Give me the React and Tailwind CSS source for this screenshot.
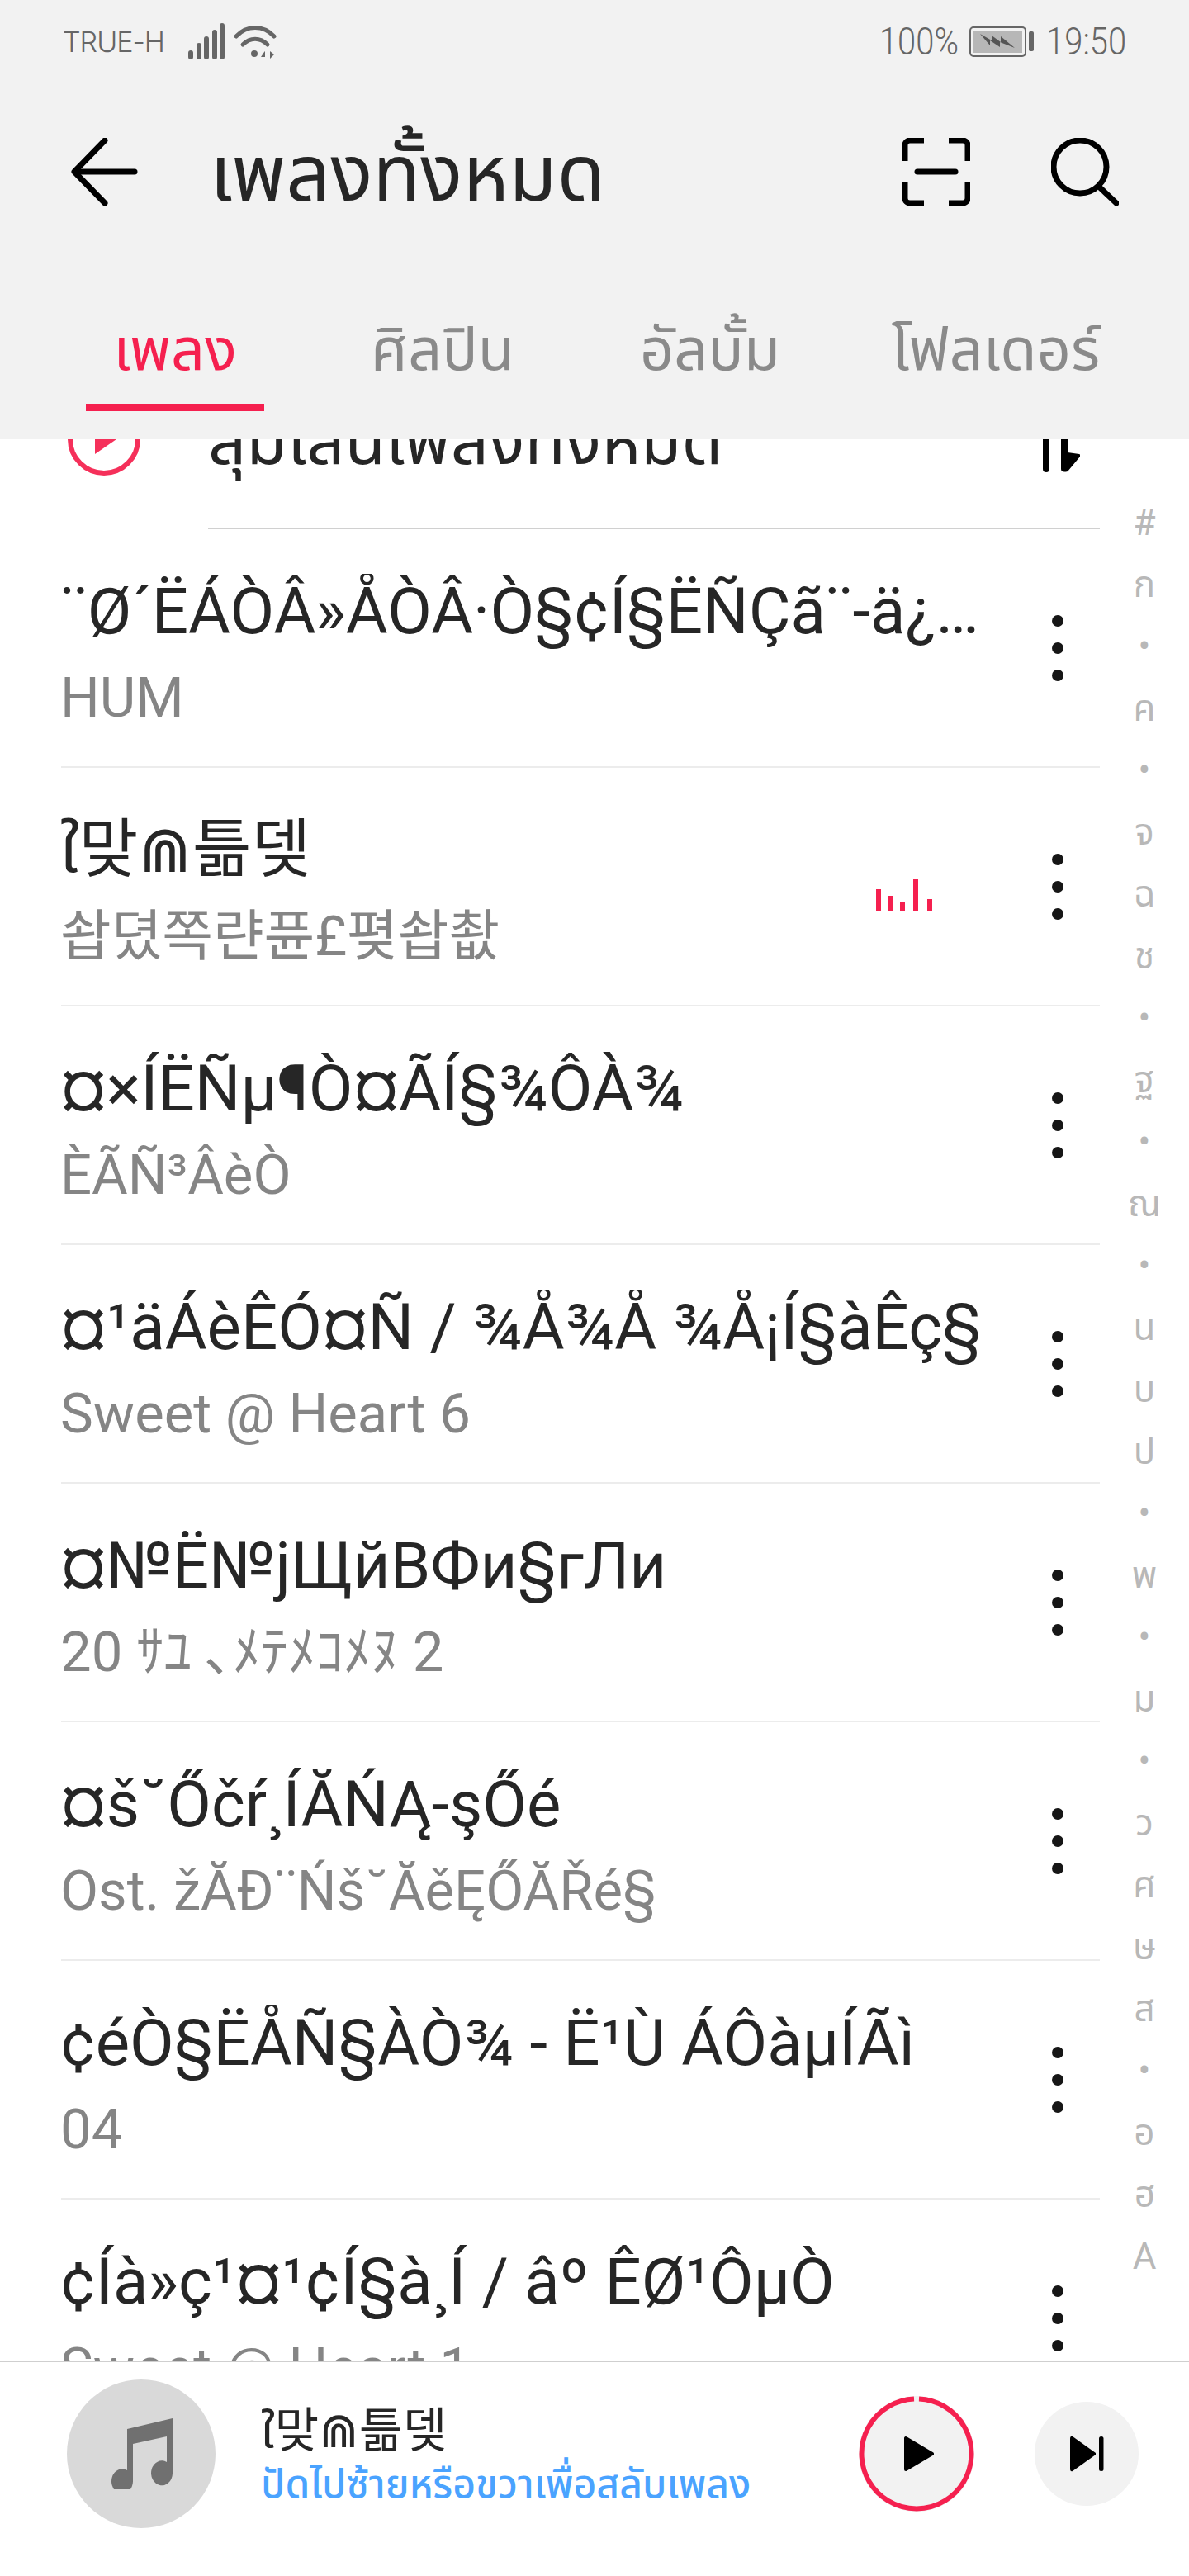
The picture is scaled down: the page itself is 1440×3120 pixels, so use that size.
import React from 'react';

const songs = [
  { title: '¨Ø´ËÁÒÂ»ÅÒÂ·Ò§¢Í§ËÑÇã¨-ä¿ÃéàÇÅÒ', sub: 'HUM' },
  { title: 'ใ맞⋒틂뎆', sub: '솹뎠쪽랸퓬£폊솹촶', playing: true },
  { title: '¤×ÍËÑµ¶Ò¤ÃÍ§¾ÔÀ¾', sub: 'ÈÃÑ³ÂèÒ' },
  { title: '¤¹äÁèÊÓ¤Ñ­ / ¾Å¾Å ¾Å¡Í§àÊç§', sub: 'Sweet @ Heart 6' },
  { title: '¤№Ë№jЩйВФи§гЛи', sub: '20 ｻﾕ ､ﾒﾃﾒｺﾒﾇ 2' },
  { title: '¤š˘Őčŕ¸ÍĂŃĄ-şŐé', sub: 'Ost. žĂĐ¨Ńš˘ĂěĘŐĂŘé§' },
  { title: '¢éÒ§ËÅÑ§ÀÒ¾ - Ë¹Ù ÁÔàµÍÃì', sub: '04' },
  { title: '¢Íà»ç¹¤¹¢Í§à¸Í / âº ÊØ¹ÔµÒ', sub: 'Sweet @ Heart 1' },
];

const indexChars = ['#', 'ก', '•', 'ค', '•', 'จ', 'ฉ', 'ช', '•', 'ฐ', '•', 'ณ', '•', 'น', 'บ', 'ป', '•', 'พ', '•', 'ม', '•', 'ว', 'ศ', 'ษ', 'ส', '•', 'อ', 'ฮ', 'A'];

const font = "font-['Roboto','Noto_Sans_Thai','Noto_Sans','Noto_Sans_CJK_KR','DejaVu_Sans',sans-serif]";

const Kebab = () => (
  <div className="flex flex-col gap-[19px] w-[14px] shrink-0">
    <span className="w-[14px] h-[14px] rounded-full bg-[#161616]" />
    <span className="w-[14px] h-[14px] rounded-full bg-[#161616]" />
    <span className="w-[14px] h-[14px] rounded-full bg-[#161616]" />
  </div>
);

const Equalizer = () => (
  <svg width="72" height="42" viewBox="0 0 72 42" className="shrink-0 mt-[20px]" fill="#f5204f">
    <rect x="2" y="14" width="6" height="26" />
    <rect x="16" y="22" width="6" height="18" />
    <rect x="31" y="30" width="6" height="10" />
    <rect x="47" y="2" width="6" height="38" />
    <rect x="64" y="26" width="6" height="14" />
  </svg>
);

const SongRow = ({ song }) => (
  <div className="h-[289px] ml-[74px] border-b-2 border-[#ececec] flex items-center">
    <div className="w-[1116px] shrink-0 min-w-0 pt-[11px] -ml-[1px]">
      <div className="text-[78px] leading-[92px] text-[#262626] truncate">{song.title}</div>
      <div className="text-[67px] leading-[80px] mt-[18px] text-[#858585] truncate">{song.sub}</div>
    </div>
    <div className="flex-1 flex items-center justify-end pr-[44px] -ml-[200px]">
      {song.playing && <div className="mr-[143px]"><Equalizer /></div>}
      <Kebab />
    </div>
  </div>
);

export default function App() {
  return (
    <div className={`w-[1440px] h-[3120px] bg-white flex flex-col overflow-hidden ${font}`}>
      {/* header */}
      <div className="h-[532px] shrink-0 bg-[#f2f2f2] relative z-10">
        <div className="h-[100px] flex items-center justify-between pl-[76px] pr-[76px] text-[#666666]">
          <div className="flex items-center">
            <span className="text-[34px] font-light font-['Inter'] w-[151px] tracking-[-1px]">TRUE-H</span>
            <svg width="46" height="44" viewBox="0 0 46 44" fill="#666666">
              <rect x="1" y="33" width="6" height="11" rx="3" />
              <rect x="11" y="24" width="6" height="20" rx="3" />
              <rect x="20" y="16" width="6" height="28" rx="3" />
              <rect x="30" y="8" width="6" height="36" rx="3" />
              <rect x="39" y="0" width="6" height="44" rx="3" />
            </svg>
            <svg width="52" height="44" viewBox="0 0 52 44" fill="none" stroke="#666666" strokeWidth="5" strokeLinecap="round" className="ml-[10px]">
              <path d="M3 16C16 2 36 2 49 16" />
              <path d="M11 26C20 17 32 17 41 26" />
              <circle cx="25" cy="37" r="4" fill="#666666" stroke="none" />
              <path d="M37 35l-4 6h5v-7M44 34v9l5-5z" fill="#666666" stroke="none" />
            </svg>
          </div>
          <div className="flex items-center">
            <span className="text-[47px] font-light scale-x-[0.85] origin-right">100%</span>
            <div className="ml-[13px] w-[69px] h-[37px] border-2 border-[#666666] rounded-[5px] p-[3px]">
              <div className="w-full h-full bg-[#b7b7b7] flex items-center justify-center">
                <svg width="44" height="22" viewBox="0 0 44 22" fill="#555555">
                  <path d="M1 2l14 8 0-6 11 8 0-7 17 14-18-7 0 6-12-8 0 6z" />
                </svg>
              </div>
            </div>
            <div className="ml-[3px] w-[6px] h-[24px] bg-[#666666] rounded-[2px]" />
            <span className="-ml-[2px] text-[47px] font-light scale-x-[0.85] origin-right">19:50</span>
          </div>
        </div>
        <div className="h-[134px] mt-[41px] flex items-center">
          <svg width="81" height="82" viewBox="0 0 81 82" fill="none" stroke="#000" strokeWidth="7" strokeLinecap="round" strokeLinejoin="round" className="ml-[86px]">
            <path d="M77 41H5" />
            <path d="M41 3L4 41l37 38" />
          </svg>
          <span className="ml-[87px] mt-[4px] text-[95px] leading-none text-[#262626] flex-1">เพลงทั้งหมด</span>
          <svg width="82" height="82" viewBox="0 0 82 82" fill="none" stroke="#000" strokeWidth="7">
            <path d="M26 3H9a6 6 0 0 0-6 6v19M56 3h17a6 6 0 0 1 6 6v19M3 54v19a6 6 0 0 0 6 6h17M79 54v19a6 6 0 0 1-6 6H56" />
            <path d="M18 41h46" strokeLinecap="round" />
          </svg>
          <svg width="82" height="82" viewBox="0 0 82 82" fill="none" stroke="#000" strokeWidth="7" strokeLinecap="round" className="ml-[98px] mr-[85px]">
            <circle cx="35" cy="35" r="32" />
            <path d="M60 61l19 18" />
          </svg>
        </div>
        <div className="flex pl-[104px] mt-[108px] text-[72px] leading-[82px] text-[#8a8a8a]">
          <div className="w-[216px] h-[115px] text-center text-[#f5204f] border-b-[9px] border-[#f5204f]">เพลง</div>
          <div className="w-[246px] ml-[93px] text-center">ศิลปิน</div>
          <div className="w-[246px] ml-[78px] text-center">อัลบั้ม</div>
          <div className="w-[300px] ml-[73px] text-center whitespace-nowrap">โฟลเดอร์</div>
        </div>
      </div>

      {/* list */}
      <div className="flex-1 min-h-0 overflow-hidden flex">
        <div className="w-[1332px] shrink-0">
          <div className="h-[188px] -mt-[81px] pb-[26px] flex items-center">
            <svg width="88" height="88" viewBox="0 0 88 88" fill="none" className="ml-[82px] shrink-0">
              <circle cx="44" cy="44" r="41" stroke="#f5305a" strokeWidth="6" />
              <path d="M33 27v35l26-18z" fill="#f5305a" strokeLinejoin="round" />
            </svg>
            <span className="ml-[82px] flex-1 mt-[6px] text-[81px] leading-[100px] text-[#262626] whitespace-nowrap">สุ่มเล่นเพลงทั้งหมด</span>
            <svg width="46" height="80" viewBox="0 0 46 80" fill="#000" className="mr-[24px]">
              <rect x="1" y="0" width="8" height="80" rx="4" />
              <path d="M23 0h8v56l14 2q2 1 1 3L31 79q-8 2-8-3z" />
            </svg>
          </div>
          <div className="h-[2px] ml-[252px] bg-[#d0d0d0]" />
          {songs.map((song, i) => (
            <SongRow key={i} song={song} />
          ))}
        </div>
        <div className="flex-1 flex flex-col items-center pt-[64px] text-[44px] text-[#b8b8b8]">
          {indexChars.map((c, i) => (
            <div key={i} className="h-[75px] shrink-0 leading-[75px]">{c}</div>
          ))}
        </div>
      </div>

      {/* now playing */}
      <div className="h-[261px] shrink-0 bg-white border-t-2 border-[#cfcfcf] pb-[37px] flex items-center relative z-10">
        <div className="w-[180px] h-[180px] rounded-full bg-[#d9d9d9] ml-[81px] flex items-center justify-center shrink-0">
          <svg width="76" height="86" viewBox="0 0 76 86" fill="#707070">
            <path d="M21 13L76 0v67a13 15 0 1 1-7-14V22L28 31v45a13 15 0 1 1-7-13z" />
          </svg>
        </div>
        <div className="ml-[55px] mt-[6px] flex-1 min-w-0">
          <div className="text-[58px] leading-[68px] text-[#262626]">ใ맞⋒틂뎆</div>
          <div className="text-[48px] leading-[62px] font-medium text-[#4aa3ff] whitespace-nowrap">ปัดไปซ้ายหรือขวาเพื่อสลับเพลง</div>
        </div>
        <div className="w-[140px] h-[140px] relative shrink-0 rounded-full bg-[#f2f2f2] flex items-center justify-center">
          <svg width="140" height="140" viewBox="0 0 140 140" fill="none" className="absolute inset-0">
            <path d="M73 3.5A66.5 66.5 0 1 1 67 3.5" stroke="#f5204f" strokeWidth="6" />
          </svg>
          <svg width="36" height="44" viewBox="0 0 36 44" fill="#000" stroke="#000" strokeWidth="4" strokeLinejoin="round" className="relative ml-[6px]">
            <path d="M2 3v38l32-19z" />
          </svg>
        </div>
        <div className="w-[126px] h-[126px] ml-[73px] mr-[61px] rounded-full bg-[#f2f2f2] flex items-center justify-center shrink-0">
          <svg width="42" height="44" viewBox="0 0 42 44" fill="#000">
            <path d="M4 1l28 20v2L4 43q-3 1-3-3V4q0-4 3-3z" />
            <rect x="36" y="1" width="5.500" height="42" rx="2.500" />
          </svg>
        </div>
      </div>
    </div>
  );
}
